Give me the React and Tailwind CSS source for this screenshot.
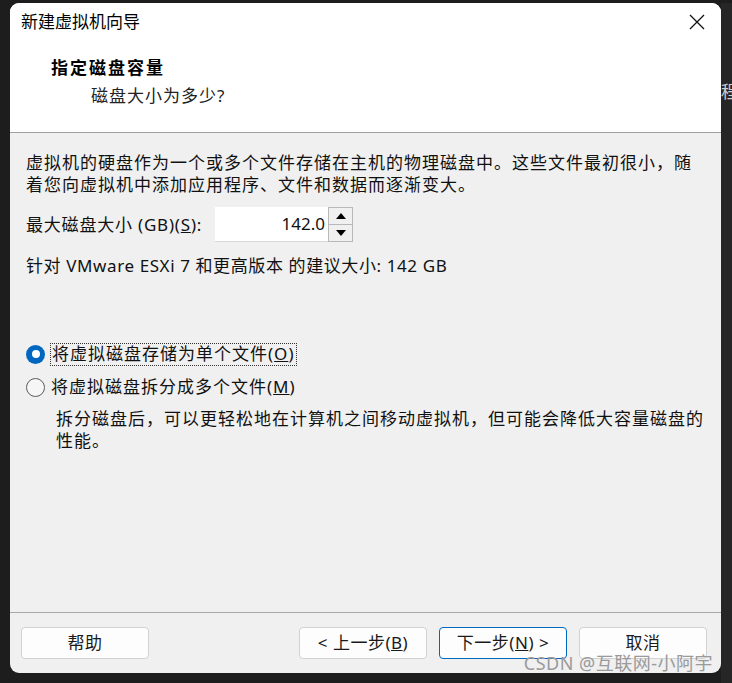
import React from "react";

const F = { fontFamily: '"Noto Sans", "Noto Sans CJK SC", sans-serif' };

function Radio({ checked }) {
  return checked ? (
    <span className="w-[19px] h-[19px] rounded-full bg-[#0067c0] flex items-center justify-center shrink-0">
      <span className="w-[8px] h-[8px] rounded-full bg-white" />
    </span>
  ) : (
    <span className="w-[19px] h-[19px] rounded-full border border-[#5a5a5a] bg-[#f6f6f6] shrink-0" />
  );
}

function Btn({ children, primary }) {
  return (
    <div
      className={
        "w-[128px] h-[32px] rounded-[4px] bg-[#fdfdfd] flex items-center justify-center text-[17px] text-[#1a1a1a] tracking-[0.5px] " +
        (primary ? "border border-[#0067c0]" : "border border-[#d2d2d2]")
      }
    >
      {children}
    </div>
  );
}

export default function App() {
  return (
    <div
      className="w-[732px] h-[683px] bg-[#1d1d1d] flex overflow-hidden relative"
      style={F}
    >
      <div className="pl-[10px] pt-[3px]">
        <div className="w-[711px] h-[670px] rounded-[9px] bg-[#f0f0f0] flex flex-col overflow-hidden">
          {/* header */}
          <div className="h-[130px] bg-white border-b border-[#a0a0a0] flex flex-col shrink-0">
            <div className="h-[38px] flex items-center justify-between pl-[11px] pr-[14px]">
              <span className="text-[17px] text-black">新建虚拟机向导</span>
              <svg width="18" height="18" viewBox="0 0 18 18" className="mr-[1px]">
                <path d="M2 2 L16 16 M16 2 L2 16" stroke="#111" strokeWidth="1.3" fill="none" />
              </svg>
            </div>
            <div className="pl-[41px] mt-[16px] h-[22px] flex items-center text-[17px] font-bold text-black tracking-[2px]">
              指定磁盘容量
            </div>
            <div className="pl-[81px] mt-[6px] h-[22px] flex items-center text-[17px] text-[#222] tracking-[1px]">
              磁盘大小为多少?
            </div>
          </div>

          {/* body */}
          <div className="flex-1 flex flex-col pl-[16px] pt-[19px] text-[17px] text-[#111]">
            <div className="leading-[22px] tracking-[1px]">
              虚拟机的硬盘作为一个或多个文件存储在主机的物理磁盘中。这些文件最初很小，随
              <br />
              着您向虚拟机中添加应用程序、文件和数据而逐渐变大。
            </div>
            <div className="mt-[11px] h-[35px] flex items-center">
              <span className="w-[189px] tracking-[0.8px] whitespace-nowrap">
                最大磁盘大小 (GB)(<span className="underline">S</span>):
              </span>
              <div className="h-[35px] w-[113px] bg-white border-b border-[#d8d8d8] flex items-center justify-end pr-[3px] text-[17px]">
                142.0
              </div>
              <div className="h-[35px] w-[25px] border border-[#b8b8b8] flex flex-col bg-[#f0f0f0]">
                <div className="flex-1 border-b border-[#b8b8b8] flex items-center justify-center">
                  <svg width="10" height="6" viewBox="0 0 10 6">
                    <path d="M0 6 L5 0 L10 6 Z" fill="#000" />
                  </svg>
                </div>
                <div className="flex-1 flex items-center justify-center">
                  <svg width="10" height="6" viewBox="0 0 10 6">
                    <path d="M0 0 L10 0 L5 6 Z" fill="#000" />
                  </svg>
                </div>
              </div>
            </div>
            <div className="mt-[13px] h-[22px] flex items-center tracking-[0.6px] whitespace-nowrap">
              针对 VMware ESXi 7 和更高版本 的建议大小: 142 GB
            </div>

            <div className="mt-[65px] h-[24px] flex items-center gap-[5px]">
              <Radio checked />
              <span className="border border-dotted border-[#333] px-[1px] h-[23px] flex items-center tracking-[1px]">
                将虚拟磁盘存储为单个文件(<span className="underline">O</span>)
              </span>
            </div>
            <div className="mt-[9px] h-[24px] flex items-center gap-[6px]">
              <Radio />
              <span className="tracking-[1px]">
                将虚拟磁盘拆分成多个文件(<span className="underline">M</span>)
              </span>
            </div>
            <div className="mt-[9px] pl-[30px] leading-[22px] tracking-[1px]">
              拆分磁盘后，可以更轻松地在计算机之间移动虚拟机，但可能会降低大容量磁盘的
              <br />
              性能。
            </div>
          </div>

          {/* footer */}
          <div className="h-[61px] border-t border-[#a8a8a8] flex items-start pt-[14px] pl-[11px] shrink-0">
            <Btn>帮助</Btn>
            <div className="ml-[150px] flex gap-[12px]">
              <Btn>
                &lt; 上一步(<span className="underline">B</span>)
              </Btn>
              <Btn primary>
                下一步(<span className="underline">N</span>) &gt;
              </Btn>
              <Btn>取消</Btn>
            </div>
          </div>
        </div>
      </div>
      <div className="flex-1 bg-[#262626] mt-[3px] relative overflow-hidden">
        <div className="absolute left-[0px] top-[76px] text-[17px] text-[#cfcfcf] whitespace-nowrap">程</div>
      </div>
      <div className="absolute right-[19px] top-[651px] text-[18px] text-[#9a9a9a] leading-[24px] tracking-[0.5px] whitespace-nowrap">
        CSDN @互联网-小阿宇
      </div>
    </div>
  );
}
